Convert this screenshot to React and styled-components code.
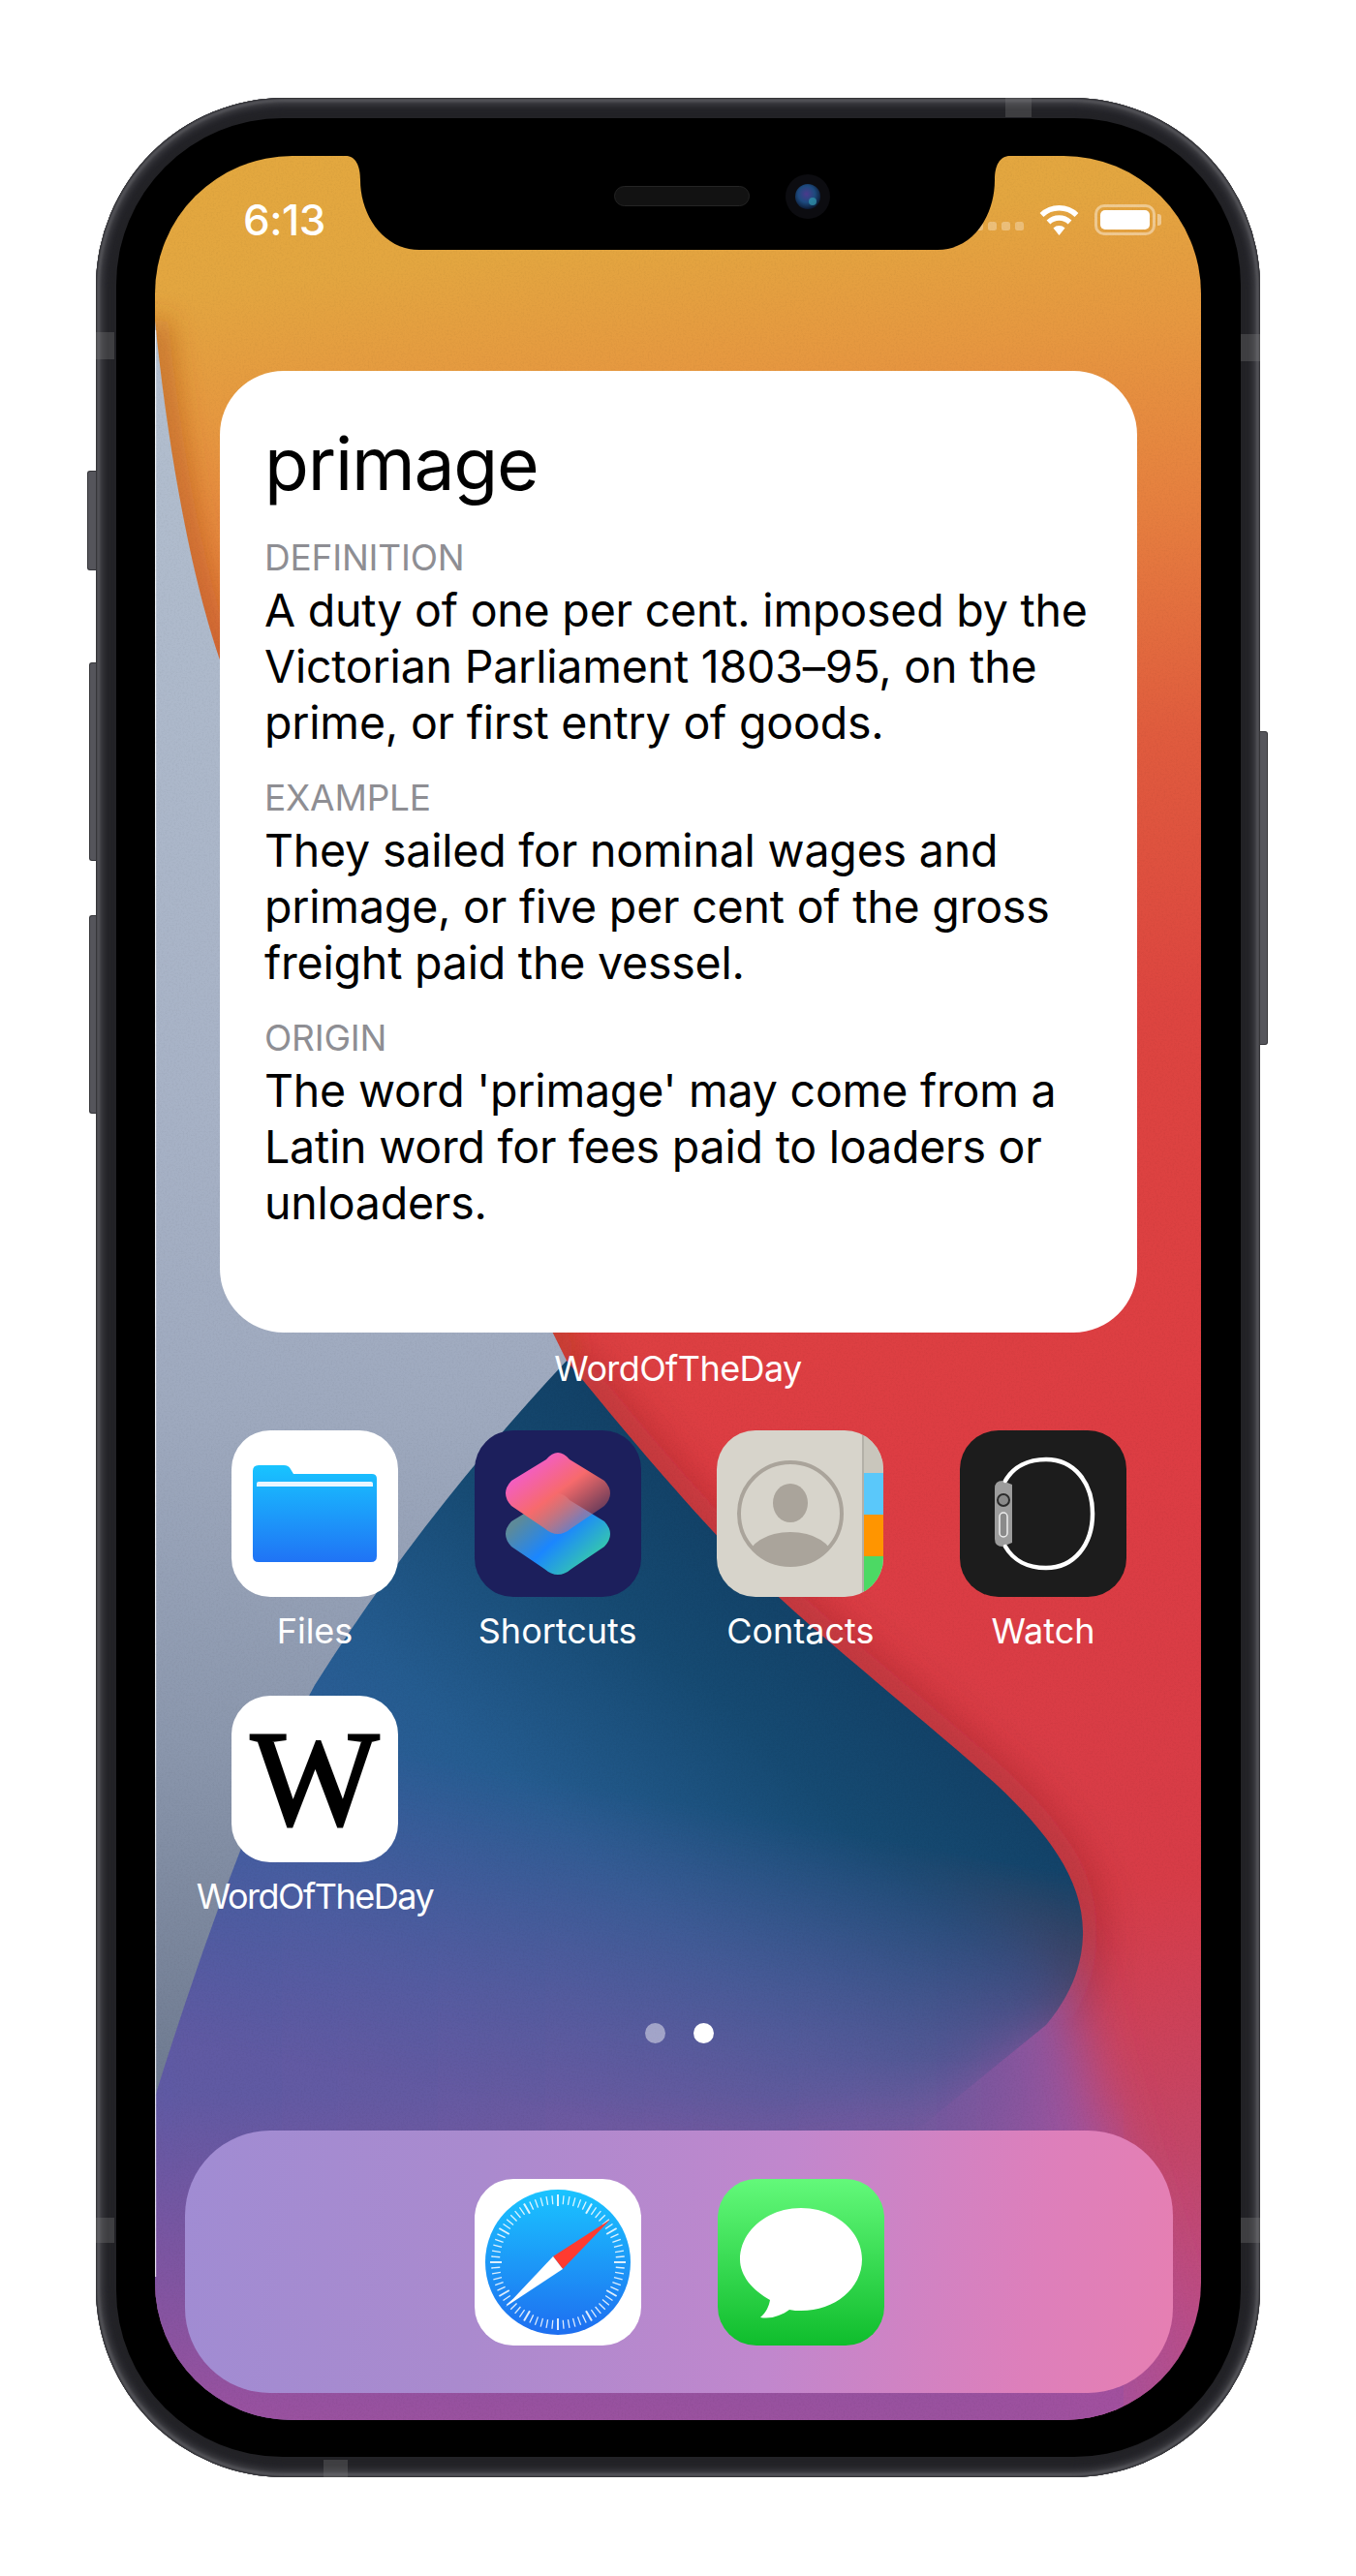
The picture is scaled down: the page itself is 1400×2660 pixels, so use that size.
import React from 'react';
import styled, { createGlobalStyle } from 'styled-components';

const GlobalStyle = createGlobalStyle`
  html, body {
    margin: 0;
    padding: 0;
    background: #fff;
    font-family: Inter, "Liberation Sans", sans-serif;
  }
`;

const Page = styled.div`
  height: 2660px;
  box-sizing: border-box;
  padding: 101px 0 0 99px;
  overflow: hidden;
`;

const Frame = styled.div`
  position: relative;
  width: 1202px;
  height: 2457px;
  box-sizing: border-box;
  padding: 21px 20px 21px 21px;
  border-radius: 195px;
  background: #222226;
  box-shadow:
    inset 0 0 2px 1px #2a2a2e,
    inset 0 0 3px 4px #58585d,
    inset 0 0 5px 8px #3a3a3f,
    inset 0 0 4px 14px #25252a;
`;

const SideButton = styled.div`
  position: absolute;
  top: ${(p) => p.$top}px;
  ${(p) => (p.$right ? 'left: 100%' : 'right: 100%')};
  width: ${(p) => p.$w}px;
  height: ${(p) => p.$h}px;
  box-sizing: border-box;
  background: #55555b;
  border: 1px solid #36363a;
  border-${(p) => (p.$right ? 'left' : 'right')}: none;
  border-radius: ${(p) => (p.$right ? '0 3px 3px 0' : '3px 0 0 3px')};
`;

const Band = styled.div`
  position: absolute;
  background: rgba(130, 130, 130, 0.3);
  top: ${(p) => (p.$top !== undefined ? `${p.$top}px` : 'auto')};
  bottom: ${(p) => (p.$bottom !== undefined ? `${p.$bottom}px` : 'auto')};
  left: ${(p) => (p.$left !== undefined ? `${p.$left}px` : 'auto')};
  right: ${(p) => (p.$right !== undefined ? `${p.$right}px` : 'auto')};
  width: ${(p) => p.$w}px;
  height: ${(p) => p.$h}px;
`;

const Bezel = styled.div`
  height: 100%;
  box-sizing: border-box;
  padding: 39px 41px 38px 40px;
  border-radius: 172px;
  background: #000;
`;

const Screen = styled.div`
  position: relative;
  width: 1080px;
  height: 2338px;
  display: flex;
  flex-direction: column;
  border-radius: 142px;
  overflow: hidden;
`;

const WallpaperSvg = styled.svg`
  position: absolute;
  inset: 0;
  width: 1080px;
  height: 2338px;
`;

const NotchSvg = styled.svg`
  position: absolute;
  top: 0;
  left: 180px;
  width: 720px;
  height: 97px;
`;

const Speaker = styled.div`
  position: absolute;
  top: 31px;
  left: 474px;
  width: 140px;
  height: 21px;
  box-sizing: border-box;
  border-radius: 11px;
  background: #121212;
  border: 1px solid #242424;
`;

const CameraSvg = styled.svg`
  position: absolute;
  top: 18px;
  left: 650px;
  width: 48px;
  height: 48px;
`;

const StatusBar = styled.div`
  position: relative;
  height: 222px;
  flex: none;
  box-sizing: border-box;
  padding: 48px 47px 0 91px;
  display: flex;
  justify-content: space-between;
  align-items: flex-start;
  color: #fff;
`;

const Clock = styled.div`
  font-size: 44px;
  line-height: 36px;
  font-weight: 500;
  letter-spacing: -0.5px;
`;

const StatusIcons = styled.div`
  display: flex;
  align-items: center;
  gap: 15px;
  margin-top: 2px;
`;

const SignalDots = styled.div`
  display: flex;
  gap: 5px;
  margin: 13px 0 0 0;
`;

const SignalDot = styled.span`
  width: 9px;
  height: 9px;
  border-radius: 2.5px;
  background: rgba(255, 255, 255, 0.3);
`;

const Battery = styled.div`
  position: relative;
  width: 63px;
  height: 32px;
  box-sizing: border-box;
  padding: 3px;
  border: 3px solid rgba(255, 255, 255, 0.42);
  border-radius: 10px;

  &::before {
    content: '';
    display: block;
    height: 100%;
    border-radius: 5px;
    background: #fff;
  }

  &::after {
    content: '';
    position: absolute;
    top: 7px;
    left: calc(100% + 5px);
    width: 4px;
    height: 12px;
    border-radius: 0 3px 3px 0;
    background: rgba(255, 255, 255, 0.42);
  }
`;

const Card = styled.section`
  position: relative;
  flex: none;
  width: 947px;
  height: 993px;
  margin-left: 67px;
  box-sizing: border-box;
  padding: 50px 40px 0 46px;
  border-radius: 66px;
  background: #fff;
  color: #000;
`;

const Word = styled.h1`
  margin: 0 0 26px;
  font-size: 75px;
  line-height: 92px;
  font-weight: 400;
  letter-spacing: -1.2px;
`;

const Section = styled.div`
  margin-bottom: 24px;
`;

const Caption = styled.div`
  font-size: 37px;
  line-height: 50px;
  letter-spacing: -0.2px;
  color: #8e8e93;
`;

const Body = styled.p`
  margin: 0;
  font-size: 46.5px;
  line-height: 58px;
  letter-spacing: -0.2px;
`;

const WidgetLabel = styled.div`
  position: relative;
  flex: none;
  margin: 16px 0 0 0;
  text-align: center;
  font-size: 36px;
  line-height: 42px;
  letter-spacing: -0.6px;
  color: #fff;
`;

const AppGrid = styled.div`
  position: relative;
  flex: none;
  display: grid;
  grid-template-columns: repeat(4, 172px);
  grid-auto-rows: 274px;
  column-gap: 78.67px;
  margin: 43px 0 0 79px;
`;

const AppCell = styled.div`
  display: flex;
  flex-direction: column;
  align-items: center;
  gap: 15px;
`;

const IconTile = styled.div`
  flex: none;
  width: 172px;
  height: 172px;
  border-radius: 40px;
  overflow: hidden;
  background: ${(p) => p.$bg || '#fff'};
`;

const IconSvg = styled.svg`
  display: block;
  width: 172px;
  height: 172px;
`;

const WikiMark = styled.div`
  height: 100%;
  display: flex;
  align-items: center;
  justify-content: center;
  font-family: "Liberation Serif", serif;
  font-size: 140px;
  line-height: 172px;
  color: #000;
  -webkit-text-stroke: 3px #000;
`;

const AppLabel = styled.div`
  white-space: nowrap;
  font-size: 36px;
  line-height: 40px;
  letter-spacing: ${(p) => (p.$tight ? '-1.5px' : '0')};
  color: #fff;
`;

const PageDots = styled.div`
  position: relative;
  flex: none;
  display: flex;
  justify-content: center;
  gap: 29px;
  margin: 0 0 0 2px;
  padding-top: 64px;
`;

const PageDot = styled.span`
  width: 21px;
  height: 21px;
  border-radius: 50%;
  background: ${(p) => (p.$active ? '#fff' : 'rgba(255, 255, 255, 0.45)')};
`;

const Dock = styled.div`
  position: relative;
  flex: none;
  width: 1020px;
  height: 271px;
  margin: auto 0 28px 31px;
  display: flex;
  justify-content: center;
  align-items: center;
  gap: 79px;
  border-radius: 88px;
  background: linear-gradient(97deg, #a08cd3 0%, #aa8ace 30%, #c187cd 60%, #dd7fbb 85%, #e67fb2 100%);
`;

function Wallpaper() {
  const redEdge =
    'M425,1244 L454,1279 C520,1360 600,1450 646,1490 C700,1540 800,1620 869,1682 C920,1730 960,1780 958,1838 C957,1870 945,1900 920,1930';
  const greyEdge = 'M0,170 C12,290 35,430 69,526 L425,1244';
  return (
    <WallpaperSvg viewBox="0 0 1080 2338">
      <defs>
        <linearGradient id="baseGrad" x1="0" y1="0" x2="260" y2="2338" gradientUnits="userSpaceOnUse">
          <stop offset="0" stopColor="#e3a83f" />
          <stop offset="0.06" stopColor="#e3a640" />
          <stop offset="0.12" stopColor="#e69840" />
          <stop offset="0.2" stopColor="#e6803f" />
          <stop offset="0.3" stopColor="#e05c3e" />
          <stop offset="0.42" stopColor="#dd4540" />
          <stop offset="0.6" stopColor="#dd3d43" />
          <stop offset="0.8" stopColor="#d73c47" />
          <stop offset="0.92" stopColor="#c44668" />
          <stop offset="1" stopColor="#bb4d88" />
        </linearGradient>
        <linearGradient id="greyGrad" x1="0" y1="170" x2="0" y2="2004" gradientUnits="userSpaceOnUse">
          <stop offset="0" stopColor="#b3bfcf" />
          <stop offset="0.45" stopColor="#a7b2c6" />
          <stop offset="0.62" stopColor="#9ea9be" />
          <stop offset="0.8" stopColor="#8b97ad" />
          <stop offset="1" stopColor="#6e7a90" />
        </linearGradient>
        <linearGradient id="blueGrad" x1="720" y1="1400" x2="260" y2="1900" gradientUnits="userSpaceOnUse">
          <stop offset="0" stopColor="#103c60" />
          <stop offset="0.35" stopColor="#164a72" />
          <stop offset="0.65" stopColor="#255c90" />
          <stop offset="1" stopColor="#35609f" />
        </linearGradient>
        <linearGradient id="blueFade" x1="540" y1="1700" x2="480" y2="2030" gradientUnits="userSpaceOnUse">
          <stop offset="0" stopColor="#fff" />
          <stop offset="1" stopColor="#000" />
        </linearGradient>
        <mask id="blueMask" maskUnits="userSpaceOnUse" x="0" y="0" width="1080" height="2338">
          <rect width="1080" height="2338" fill="url(#blueFade)" />
          <ellipse cx="990" cy="2050" rx="170" ry="110" fill="#000" filter="url(#soft)" />
          <ellipse cx="800" cy="2080" rx="170" ry="70" fill="#000" filter="url(#soft)" />
        </mask>
        <linearGradient id="purpleH" x1="0" y1="0" x2="1040" y2="0" gradientUnits="userSpaceOnUse">
          <stop offset="0" stopColor="#5f5aa4" />
          <stop offset="0.77" stopColor="#6e5a9e" />
          <stop offset="0.87" stopColor="#8a559e" />
          <stop offset="0.93" stopColor="#a5529f" />
          <stop offset="1" stopColor="#b04f90" />
        </linearGradient>
        <linearGradient id="purpleV" x1="0" y1="2000" x2="0" y2="2338" gradientUnits="userSpaceOnUse">
          <stop offset="0" stopColor="#a0509f" stopOpacity="0" />
          <stop offset="1" stopColor="#a0509f" stopOpacity="0.9" />
        </linearGradient>
        <filter id="soft" x="-30%" y="-30%" width="160%" height="160%">
          <feGaussianBlur stdDeviation="28" />
        </filter>
        <filter id="edgeBlur" x="-20%" y="-20%" width="140%" height="140%">
          <feGaussianBlur stdDeviation="22" />
        </filter>
        <filter id="tipBlur" x="-20%" y="-20%" width="140%" height="140%">
          <feGaussianBlur stdDeviation="14" />
        </filter>
        <filter id="grain">
          <feTurbulence type="fractalNoise" baseFrequency="0.55" numOctaves="2" seed="4" />
          <feColorMatrix values="0 0 0 0 0  0 0 0 0 0  0 0 0 0 0  0 0 0 0.9 -0.38" />
        </filter>
      </defs>
      <rect width="1080" height="2338" fill="url(#baseGrad)" />
      <path d={redEdge} fill="none" stroke="#5a1526" strokeOpacity="0.3" strokeWidth="36" filter="url(#edgeBlur)" />
      <path d={greyEdge} fill="none" stroke="#a93f1a" strokeOpacity="0.5" strokeWidth="28" filter="url(#tipBlur)" />
      <path
        d="M940,1860 C950,1960 1030,2150 1090,2420 L-60,2420 L-60,1600 L600,1600 Z"
        fill="url(#purpleH)"
        filter="url(#soft)"
      />
      <rect y="2000" width="1000" height="338" fill="url(#purpleV)" />
      <path d={`${redEdge} L760,2060 L760,2338 L0,2338 L0,1400 Z`} fill="url(#blueGrad)" mask="url(#blueMask)" />
      <path
        d="M0,170 C12,290 35,430 69,526 L425,1244 C330,1345 240,1460 165,1579 C105,1690 45,1860 0,2004 Z"
        fill="url(#greyGrad)"
      />
      <rect y="180" width="1.2" height="2010" fill="#fff" opacity="0.8" />
      <rect width="1080" height="2338" filter="url(#grain)" opacity="0.09" />
    </WallpaperSvg>
  );
}

function FilesIcon() {
  return (
    <IconSvg viewBox="0 0 172 172">
      <defs>
        <linearGradient id="filesGrad" x1="0" y1="36" x2="0" y2="136" gradientUnits="userSpaceOnUse">
          <stop offset="0" stopColor="#18c4ff" />
          <stop offset="1" stopColor="#2073f5" />
        </linearGradient>
      </defs>
      <path
        d="M22,42 Q22,36 28,36 L54,36 Q59,36 61,40 L64,45 L145,45 Q150,45 150,50 L150,130 Q150,136 144,136 L28,136 Q22,136 22,130 Z"
        fill="url(#filesGrad)"
      />
      <path d="M26,58 L26,55 Q26,53 28,53 L144,53 Q146,53 146,55 L146,58 Z" fill="#e9f6ff" />
    </IconSvg>
  );
}

function ShortcutsIcon() {
  return (
    <IconSvg viewBox="0 0 172 172">
      <defs>
        <linearGradient id="scTop" x1="60" y1="25" x2="115" y2="100" gradientUnits="userSpaceOnUse">
          <stop offset="0" stopColor="#f25bd6" />
          <stop offset="0.5" stopColor="#f76a6c" />
          <stop offset="1" stopColor="#f3705a" stopOpacity="0.3" />
        </linearGradient>
        <linearGradient id="scBottom" x1="55" y1="85" x2="115" y2="150" gradientUnits="userSpaceOnUse">
          <stop offset="0" stopColor="#5c8a9a" />
          <stop offset="0.45" stopColor="#1a86ff" />
          <stop offset="1" stopColor="#3ad2a0" />
        </linearGradient>
      </defs>
      <path
        d="M74,72 Q86,58 98,72 L134,94 Q146,107 134,120 L100,143 Q86,155 72,143 L38,120 Q26,107 38,94 Z"
        fill="url(#scBottom)"
      />
      <path
        d="M74,30 Q86,16 98,30 L134,52 Q146,65 134,78 L100,101 Q86,113 72,101 L38,78 Q26,65 38,52 Z"
        fill="url(#scTop)"
      />
    </IconSvg>
  );
}

function ContactsIcon() {
  return (
    <IconSvg viewBox="0 0 172 172">
      <defs>
        <clipPath id="ringClip">
          <circle cx="76" cy="86" r="52" />
        </clipPath>
      </defs>
      <rect x="152" y="0" width="20" height="44" fill="#c9c6bc" />
      <rect x="152" y="44" width="20" height="43" fill="#5ac8fa" />
      <rect x="152" y="87" width="20" height="43" fill="#ff9500" />
      <rect x="152" y="130" width="20" height="42" fill="#4cd964" />
      <rect x="150" y="0" width="2" height="172" fill="#b3b0a7" />
      <circle cx="76" cy="86" r="53" fill="none" stroke="#aaa49b" strokeWidth="4" />
      <ellipse cx="76" cy="75" rx="18" ry="20" fill="#aaa49b" />
      <g clipPath="url(#ringClip)">
        <ellipse cx="76" cy="132" rx="44" ry="27" fill="#aaa49b" />
      </g>
    </IconSvg>
  );
}

function WatchIcon() {
  return (
    <IconSvg viewBox="0 0 172 172">
      <path d="M36,60 Q36,52 44,52 L54,56 L54,116 L44,120 Q36,120 36,112 Z" fill="#9c9c9c" />
      <path
        d="M47,52 C55,38 70,30 89,30 C118,30 137,54 137,86 C137,118 118,142 89,142 C70,142 55,134 47,120"
        fill="none"
        stroke="#fff"
        strokeWidth="4.5"
        strokeLinecap="round"
      />
      <circle cx="45" cy="72" r="6" fill="#8a8a8a" stroke="#2b2b2b" strokeWidth="2" />
      <rect x="41" y="85" width="8" height="25" rx="4" fill="#8a8a8a" stroke="#eee" strokeWidth="1.5" />
    </IconSvg>
  );
}

function SafariIcon() {
  const ticks = Array.from({ length: 72 }, (_, i) => i * 5);
  return (
    <IconSvg viewBox="0 0 172 172">
      <defs>
        <linearGradient id="safariGrad" x1="0" y1="11" x2="0" y2="161" gradientUnits="userSpaceOnUse">
          <stop offset="0" stopColor="#1ac4ff" />
          <stop offset="1" stopColor="#1e6ef0" />
        </linearGradient>
      </defs>
      <circle cx="86" cy="86" r="75" fill="url(#safariGrad)" />
      {ticks.map((deg) => (
        <line
          key={deg}
          x1="86"
          y1={deg % 30 === 0 ? 16 : 17}
          x2="86"
          y2={deg % 30 === 0 ? 28 : 26}
          stroke="#fff"
          strokeWidth={deg % 30 === 0 ? 2 : 1.3}
          opacity="0.85"
          transform={`rotate(${deg} 86 86)`}
        />
      ))}
      <polygon points="140,42 81,80 91,93" fill="#ff3b30" />
      <polygon points="32,132 81,80 91,93" fill="#fff" />
    </IconSvg>
  );
}

function MessagesIcon() {
  return (
    <IconSvg viewBox="0 0 172 172">
      <path
        d="M86,30 C121,30 149,54 149,83 C149,113 121,136 86,136 C82,136 78,136 74,135 C66,141 55,145 44,143 C50,138 53,131 54,125 C36,115 23,100 23,83 C23,54 51,30 86,30 Z"
        fill="#fff"
      />
    </IconSvg>
  );
}

const sections = [
  { label: 'DEFINITION', text: 'A duty of one per cent. imposed by the Victorian Parliament 1803–95, on the prime, or first entry of goods.' },
  { label: 'EXAMPLE', text: 'They sailed for nominal wages and primage, or five per cent of the gross freight paid the vessel.' },
  { label: 'ORIGIN', text: "The word 'primage' may come from a Latin word for fees paid to loaders or unloaders." },
];

const apps = [
  { name: 'Files', bg: '#fff', icon: <FilesIcon /> },
  { name: 'Shortcuts', bg: '#1c1f5c', icon: <ShortcutsIcon /> },
  { name: 'Contacts', bg: '#d7d4cb', icon: <ContactsIcon /> },
  { name: 'Watch', bg: '#1c1c1c', icon: <WatchIcon /> },
  { name: 'WordOfTheDay', bg: '#fff', icon: <WikiMark>W</WikiMark>, tight: true },
];

export default function App() {
  return (
    <Page>
      <GlobalStyle />
      <Frame>
        <SideButton $top={385} $w={9} $h={103} />
        <SideButton $top={583} $w={7} $h={205} />
        <SideButton $top={844} $w={7} $h={205} />
        <SideButton $right $top={654} $w={8} $h={324} />
        <Band $top={242} $left={0} $w={19} $h={28} />
        <Band $top={244} $right={0} $w={20} $h={28} />
        <Band $top={2189} $left={0} $w={19} $h={26} />
        <Band $top={2189} $right={0} $w={20} $h={26} />
        <Band $top={0} $left={939} $w={27} $h={20} />
        <Band $bottom={0} $left={235} $w={25} $h={18} />
        <Bezel>
          <Screen>
            <Wallpaper />
            <StatusBar>
              <Clock>6:13</Clock>
              <StatusIcons>
                <SignalDots>
                  <SignalDot />
                  <SignalDot />
                  <SignalDot />
                  <SignalDot />
                </SignalDots>
                <svg width="43" height="32" viewBox="0 0 43 32">
                  <path d="M3.5,11 A26,26 0 0 1 39.5,11" fill="none" stroke="#fff" strokeWidth="5.5" />
                  <path d="M10.5,18.5 A16,16 0 0 1 32.5,18.5" fill="none" stroke="#fff" strokeWidth="5.5" />
                  <path d="M15.5,24.5 A8.5,8.5 0 0 1 27.5,24.5 L21.5,32 Z" fill="#fff" />
                </svg>
                <Battery />
              </StatusIcons>
            </StatusBar>
            <NotchSvg viewBox="0 0 720 97">
              <path
                d="M17,0 C27,0 32,10 32,25 C32,60 55,97 93,97 L628,97 C666,97 687,60 687,25 C687,10 692,0 703,0 Z"
                fill="#000"
              />
            </NotchSvg>
            <Speaker />
            <CameraSvg viewBox="0 0 48 48">
              <defs>
                <radialGradient id="lens" cx="0.45" cy="0.4" r="0.6">
                  <stop offset="0" stopColor="#4b3a8c" />
                  <stop offset="0.55" stopColor="#1d4a7e" />
                  <stop offset="1" stopColor="#0c1a33" />
                </radialGradient>
              </defs>
              <circle cx="24" cy="24" r="23" fill="#0c0c10" />
              <circle cx="24" cy="24" r="13" fill="url(#lens)" />
              <circle cx="29" cy="29" r="4" fill="#2f8fa8" opacity="0.8" />
            </CameraSvg>
            <Card>
              <Word>primage</Word>
              {sections.map((s) => (
                <Section key={s.label}>
                  <Caption>{s.label}</Caption>
                  <Body>{s.text}</Body>
                </Section>
              ))}
            </Card>
            <WidgetLabel>WordOfTheDay</WidgetLabel>
            <AppGrid>
              {apps.map((a) => (
                <AppCell key={a.name}>
                  <IconTile $bg={a.bg}>{a.icon}</IconTile>
                  <AppLabel $tight={a.tight}>{a.name}</AppLabel>
                </AppCell>
              ))}
            </AppGrid>
            <PageDots>
              <PageDot />
              <PageDot $active />
            </PageDots>
            <Dock>
              <IconTile>
                <SafariIcon />
              </IconTile>
              <IconTile $bg="linear-gradient(180deg, #63f97a, #0fbd2c)">
                <MessagesIcon />
              </IconTile>
            </Dock>
          </Screen>
        </Bezel>
      </Frame>
    </Page>
  );
}
